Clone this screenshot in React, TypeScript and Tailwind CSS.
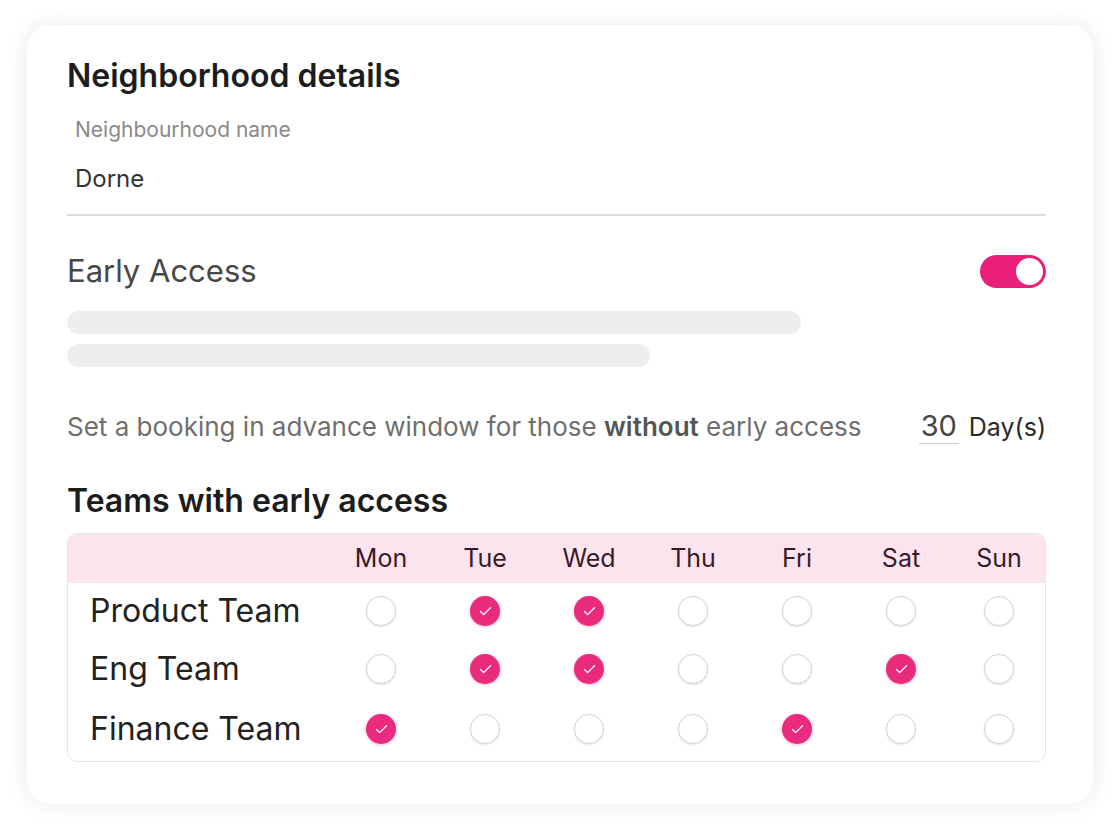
import { Check } from 'lucide-react';

const days = ['Mon', 'Tue', 'Wed', 'Thu', 'Fri', 'Sat', 'Sun'];

const teams = [
  { name: 'Product Team', h: 'h-[56px]', on: [false, true, true, false, false, false, false] },
  { name: 'Eng Team', h: 'h-[60px]', on: [false, true, true, false, false, true, false] },
  { name: 'Finance Team', h: 'h-[60px]', on: [true, false, false, false, true, false, false] },
];

const Dot = ({ checked }: { checked: boolean }) =>
  checked ? (
    <span className="flex h-[30px] w-[30px] items-center justify-center rounded-full bg-[#ea2a7c] shadow-[0_1px_3px_rgba(234,42,124,0.35)]">
      <Check className="h-[15px] w-[15px] text-white" strokeWidth={2.2} />
    </span>
  ) : (
    <span className="block h-[30px] w-[30px] rounded-full border border-[#d4d4d4] bg-white shadow-[0_1px_2px_rgba(0,0,0,0.12)]" />
  );

export default function App() {
  return (
    <div className="min-h-screen bg-white p-[25px_27px] font-['Inter',sans-serif]">
      <div className="flex w-[1066px] flex-col rounded-[24px] bg-white pb-[42px] pl-[40px] pr-[47px] pt-[34px] shadow-[0_0_22px_rgba(0,0,0,0.09)]">
        <h1 className="text-[32px] font-semibold leading-[34px] text-[#1c1c1c]">Neighborhood details</h1>

        <div className="mt-[25px] border-b-2 border-[#dcdcdc] pb-[21px] pl-[8px]">
          <div className="text-[21px] leading-[24px] text-[#8a8a8a]">Neighbourhood name</div>
          <div className="mt-[23px] text-[24px] leading-[28px] text-[#333]">Dorne</div>
        </div>

        <div className="mt-[38px] flex items-center justify-between">
          <span className="text-[31px] leading-[34px] text-[#474747]">Early Access</span>
          <span className="relative flex h-[33px] w-[66px] items-center rounded-full bg-[#ea1f7a]">
            <span className="absolute right-[3px] h-[27px] w-[27px] rounded-full bg-white" />
          </span>
        </div>

        <div className="mt-[23px] flex flex-col gap-[10px]">
          <div className="h-[23px] w-[734px] rounded-full bg-[#eceef0]" />
          <div className="h-[23px] w-[583px] rounded-full bg-[#eceef0]" />
        </div>

        <div className="mt-[42px] flex items-center justify-between">
          <p className="text-[26px] leading-[30px] text-[#6f6f6f]">
            Set a booking in advance window for those <span className="font-semibold text-[#555]">without</span> early access
          </p>
          <div className="flex items-center gap-[10px]">
            <span className="w-[40px] border-b border-[#cfcfcf] text-center text-[29px] leading-[34px] text-[#444]">30</span>
            <span className="text-[25px] leading-[30px] text-[#2a2a2a]">Day(s)</span>
          </div>
        </div>

        <h2 className="mt-[40px] text-[32px] font-semibold leading-[34px] text-[#1c1c1c]">Teams with early access</h2>

        <div className="mt-[15px] overflow-hidden rounded-[10px] border border-[#e6e6e6] pb-[2px]">
          <div className="grid h-[49px] grid-cols-[261px_repeat(6,104px)_1fr] items-center bg-[#fce4ef]">
            <span />
            {days.map((d) => (
              <span key={d} className="text-center text-[25px] text-[#3a1a28]">
                {d}
              </span>
            ))}
          </div>
          {teams.map((t) => (
            <div key={t.name} className={`grid grid-cols-[261px_repeat(6,104px)_1fr] items-center ${t.h}`}>
              <span className="pl-[22px] text-[32px] text-[#222]">{t.name}</span>
              {t.on.map((c, i) => (
                <span key={i} className="flex justify-center">
                  <Dot checked={c} />
                </span>
              ))}
            </div>
          ))}
        </div>
      </div>
    </div>
  );
}
